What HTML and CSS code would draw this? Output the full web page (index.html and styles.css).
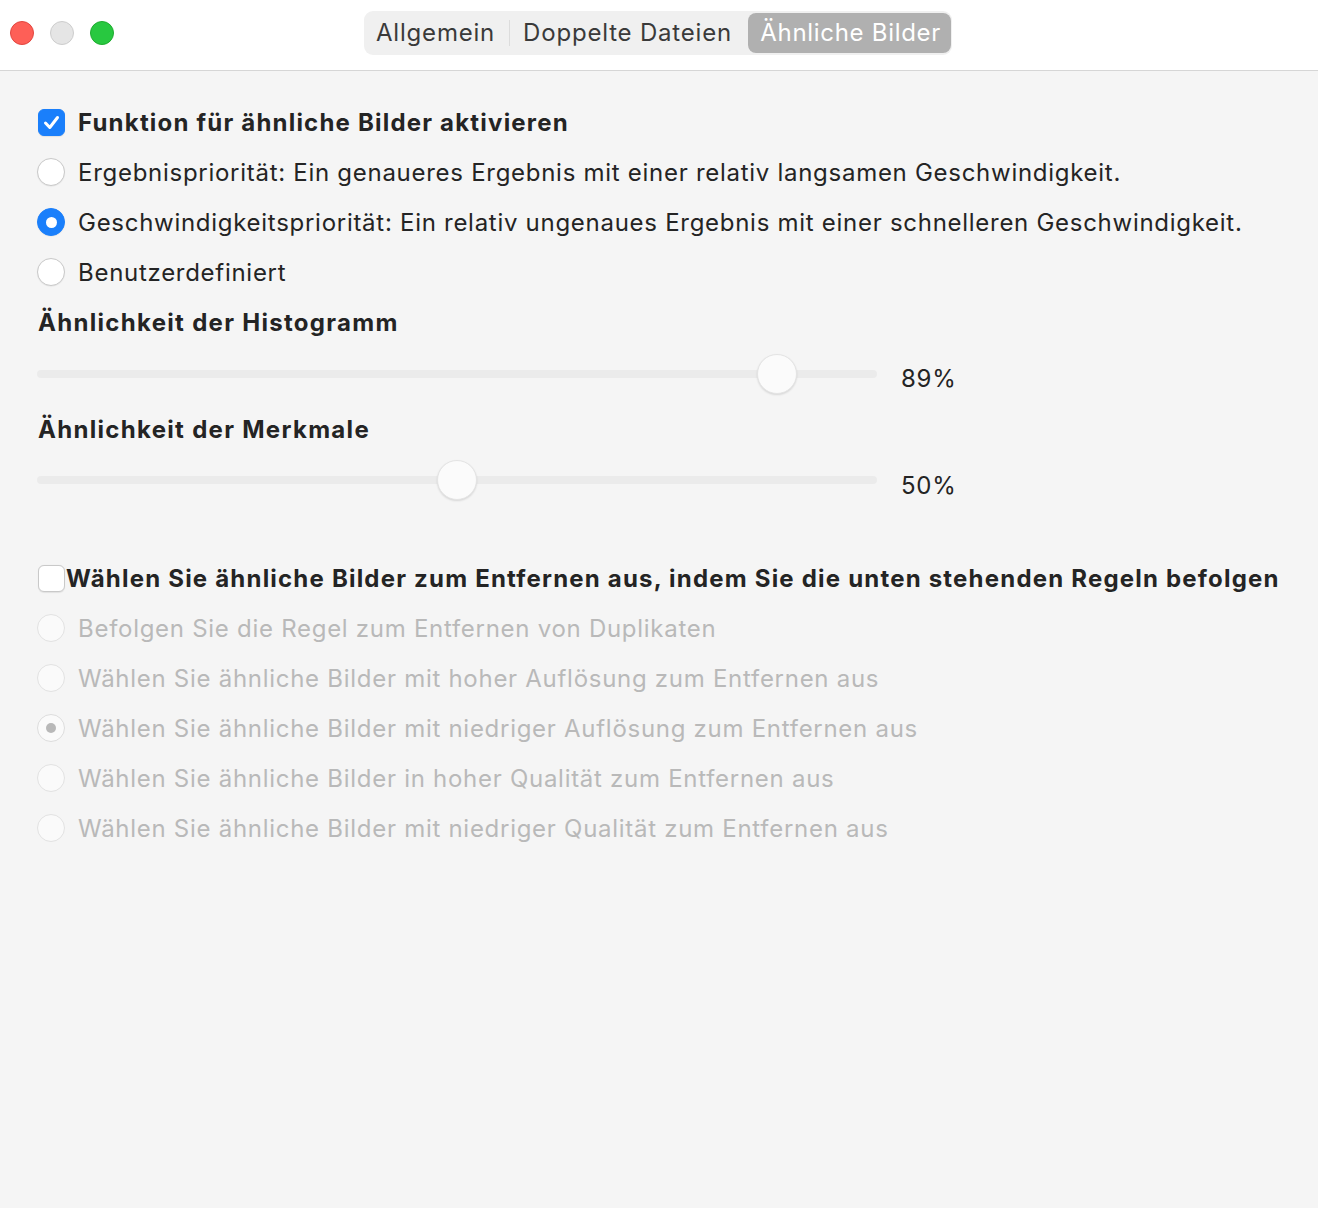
FILE: index.html
```html
<!DOCTYPE html>
<html lang="de">
<head>
<meta charset="utf-8">
<title>Ähnliche Bilder</title>
<link rel="stylesheet" href="styles.css">
</head>
<body>
<div class="window">
  <header class="titlebar">
    <div class="lights">
      <span class="light red"></span>
      <span class="light gray"></span>
      <span class="light green"></span>
    </div>
    <nav class="segments">
      <span class="seg">Allgemein</span>
      <span class="sep"></span>
      <span class="seg">Doppelte Dateien</span>
      <span class="seg active">Ähnliche Bilder</span>
    </nav>
  </header>
  <main class="content">
    <div class="row">
      <span class="checkbox checked"><svg viewBox="0 0 27 27" width="27" height="27"><path d="M7.5 14 L11.8 18.5 L19.5 8.5" fill="none" stroke="#fff" stroke-width="3" stroke-linecap="round" stroke-linejoin="round"/></svg></span>
      <span class="label bold">Funktion für ähnliche Bilder aktivieren</span>
    </div>
    <div class="row">
      <span class="radio"></span>
      <span class="label">Ergebnispriorität: Ein genaueres Ergebnis mit einer relativ langsamen Geschwindigkeit.</span>
    </div>
    <div class="row">
      <span class="radio on"></span>
      <span class="label">Geschwindigkeitspriorität: Ein relativ ungenaues Ergebnis mit einer schnelleren Geschwindigkeit.</span>
    </div>
    <div class="row">
      <span class="radio"></span>
      <span class="label">Benutzerdefiniert</span>
    </div>
    <div class="row heading">Ähnlichkeit der Histogramm</div>
    <div class="slider-row">
      <div class="track"><span class="thumb" style="left: 720px"></span></div>
      <span class="value">89%</span>
    </div>
    <div class="row heading">Ähnlichkeit der Merkmale</div>
    <div class="slider-row second">
      <div class="track"><span class="thumb" style="left: 400px"></span></div>
      <span class="value">50%</span>
    </div>
    <div class="row rule-head">
      <span class="checkbox"></span>
      <span class="label bold tight">Wählen Sie ähnliche Bilder zum Entfernen aus, indem Sie die unten stehenden Regeln befolgen</span>
    </div>
    <div class="row disabled">
      <span class="radio"></span>
      <span class="label">Befolgen Sie die Regel zum Entfernen von Duplikaten</span>
    </div>
    <div class="row disabled">
      <span class="radio"></span>
      <span class="label">Wählen Sie ähnliche Bilder mit hoher Auflösung zum Entfernen aus</span>
    </div>
    <div class="row disabled">
      <span class="radio on"></span>
      <span class="label">Wählen Sie ähnliche Bilder mit niedriger Auflösung zum Entfernen aus</span>
    </div>
    <div class="row disabled">
      <span class="radio"></span>
      <span class="label">Wählen Sie ähnliche Bilder in hoher Qualität zum Entfernen aus</span>
    </div>
    <div class="row disabled">
      <span class="radio"></span>
      <span class="label">Wählen Sie ähnliche Bilder mit niedriger Qualität zum Entfernen aus</span>
    </div>
  </main>
</div>
</body>
</html>
```
FILE: styles.css
```css
* { box-sizing: border-box; }
html, body {
  margin: 0;
  padding: 0;
  height: 100%;
}
body {
  background: #f5f5f5;
  font-family: Inter, "Noto Sans", "Liberation Sans", sans-serif;
  color: #242424;
  letter-spacing: 0.72px;
}
.window {
  min-height: 1208px;
  background: #f5f5f5;
}
.titlebar {
  height: 71px;
  background: #ffffff;
  border-bottom: 1px solid #d6d6d6;
  display: flex;
  align-items: flex-start;
  position: relative;
}
.lights {
  display: flex;
  gap: 16px;
  padding: 21px 0 0 10px;
}
.light {
  width: 24px;
  height: 24px;
  border-radius: 50%;
  display: block;
}
.light.red { background: #fe5f57; border: 1px solid #e2463f; }
.light.gray { background: #e5e5e5; border: 1px solid #cdcdcd; }
.light.green { background: #28c840; border: 1px solid #1eac2f; }
.segments {
  margin-left: 250px;
  margin-top: 11px;
  height: 44px;
  width: 588px;
  background: #f0f0f0;
  border-radius: 9px;
  display: flex;
  align-items: center;
  padding: 0 1px 0 12px;
  font-size: 24px;
  color: #3a3a3a;
  letter-spacing: 0.8px;
}
.seg {
  line-height: 40px;
  white-space: nowrap;
}
.sep {
  width: 1px;
  height: 26px;
  background: #dcdcdc;
  margin: 0 13px 0 14px;
}
.seg.active {
  margin-left: auto;
  background: #b0b0b0;
  color: #ffffff;
  border-radius: 8px;
  padding: 0 10px 0 12px;
  height: 40px;
  letter-spacing: 0.7px;
}
.content {
  padding: 26px 0 0 37px;
}
.row {
  height: 50px;
  display: flex;
  align-items: center;
  font-size: 24px;
  white-space: nowrap;
}
.label { margin-left: 13px; }
.label.tight { margin-left: 1px; }
.bold { font-weight: 700; letter-spacing: 1.2px; }
.heading { font-weight: 700; padding-left: 1px; letter-spacing: 1.3px; }
.checkbox {
  width: 27px;
  height: 27px;
  border-radius: 6px;
  background: #ffffff;
  border: 1px solid #c9c9c9;
  display: block;
  flex: none;
  margin-left: 1px;
  box-shadow: 0 0.5px 1px rgba(0,0,0,0.08);
}
.checkbox.checked {
  background: #1a7ffb;
  border-color: #1a7ffb;
  position: relative;
}
.checkbox svg { position: absolute; left: -1px; top: -1px; }
.radio {
  width: 28px;
  height: 28px;
  border-radius: 50%;
  background: #ffffff;
  border: 1px solid #c9c9c9;
  display: flex;
  align-items: center;
  justify-content: center;
  flex: none;
  box-shadow: 0 0.5px 1px rgba(0,0,0,0.08);
}
.radio.on {
  background: #1a7ffb;
  border-color: #1a7ffb;
}
.radio.on::after {
  content: "";
  width: 11px;
  height: 11px;
  border-radius: 50%;
  background: #ffffff;
}
.disabled { color: #b9b9b9; }
.disabled .radio {
  background: #fafafa;
  border-color: #e2e2e2;
  box-shadow: none;
}
.disabled .radio.on {
  background: #fafafa;
  border-color: #dddddd;
}
.disabled .radio.on::after {
  background: #b8b8b8;
  width: 10px;
  height: 10px;
}
.rule-head { margin-top: 42px; }
.slider-row {
  height: 57px;
  display: flex;
  align-items: flex-start;
}
.track {
  width: 840px;
  height: 8px;
  margin-top: 23px;
  background: #ebebeb;
  border-radius: 4px;
  position: relative;
  flex: none;
}
.slider-row.second .track { margin-top: 22px; }
.thumb {
  position: absolute;
  top: -16px;
  width: 40px;
  height: 40px;
  border-radius: 50%;
  background: #fbfbfb;
  border: 1px solid #e4e4e4;
  box-shadow: 0 1px 2px rgba(0,0,0,0.12);
}
.value {
  margin-left: 24px;
  margin-top: 17px;
  font-size: 24px;
  line-height: 30px;
  color: #242424;
}
```
